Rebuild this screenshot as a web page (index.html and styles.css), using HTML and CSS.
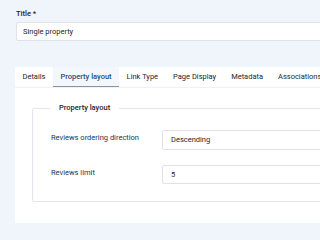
FILE: index.html
```html
<!DOCTYPE html>
<html>
<head>
<meta charset="utf-8">
<link rel="stylesheet" href="styles.css">
</head>
<body>
<div class="page">
  <label class="title-label">Title *</label>
  <div class="field title-field">Single property</div>
  <div class="panel">
    <div class="tabs">
      <div class="tab">Details</div>
      <div class="tab active">Property layout</div>
      <div class="tab">Link Type</div>
      <div class="tab">Page Display</div>
      <div class="tab">Metadata</div>
      <div class="tab">Associations</div>
    </div>
    <div class="content">
      <fieldset class="group">
        <legend>Property layout</legend>
        <div class="row first">
          <div class="row-label">Reviews ordering direction</div>
          <div class="field">Descending</div>
        </div>
        <div class="row">
          <div class="row-label">Reviews limit</div>
          <div class="field">5</div>
        </div>
      </fieldset>
    </div>
  </div>
</div>
</body>
</html>
```
FILE: styles.css
```css
html, body {
  margin: 0;
  padding: 0;
  background: #f0f4fb;
  overflow: hidden;
}
body {
  font-family: Roboto, "Noto Sans", sans-serif;
  font-size: 7.5px;
  color: #22262a;
}
.page {
  overflow: hidden;
  padding: 8px 0 0 16px;
}
.title-label {
  display: block;
  line-height: 12px;
  font-weight: 500;
  color: #1f2328;
}
.field {
  box-sizing: border-box;
  height: 19px;
  line-height: 17px;
  border: 1px solid #dfe3e8;
  border-radius: 2px;
  background: #fff;
  padding-left: 8px;
  color: #22262a;
}
.title-field {
  margin-top: 2px;
  margin-right: -40px;
  padding-left: 6px;
}
.panel {
  margin-top: 26px;
  margin-left: -1px;
  margin-right: -40px;
  background: #fff;
  height: 156px;
  overflow: hidden;
}
.tabs {
  display: flex;
  height: 21px;
  border-bottom: 1px solid #eef1f5;
  box-sizing: border-box;
  overflow: hidden;
}
.tab {
  box-sizing: border-box;
  height: 21px;
  line-height: 20px;
  padding: 0 7.5px;
  white-space: nowrap;
  color: #22262a;
  flex: none;
}
.tab.active {
  background: #f3f6fb;
  border-bottom: 2px solid #8593aa;
  color: #2b4b7a;
  font-weight: 500;
}
.content {
  padding: 15px 0 0 17px;
}
.group {
  margin: 0;
  border: 1px solid #e3e6ea;
  border-radius: 2px;
  padding: 0 0 17px 17px;
  min-inline-size: 0;
}
.group legend {
  padding: 0 9px;
  line-height: 10px;
  font-weight: 500;
  color: #22262a;
}
.row {
  display: grid;
  grid-template-columns: 112px 1fr;
  margin-top: 15px;
}
.row.first {
  margin-top: 17px;
}
.row .field {
  height: 20px;
  line-height: 18px;
}
.row + .row .field {
  height: 19px;
  line-height: 17px;
}
.row-label {
  padding-top: 2px;
  padding-left: 1px;
  line-height: 12px;
  color: #243650;
}
```
